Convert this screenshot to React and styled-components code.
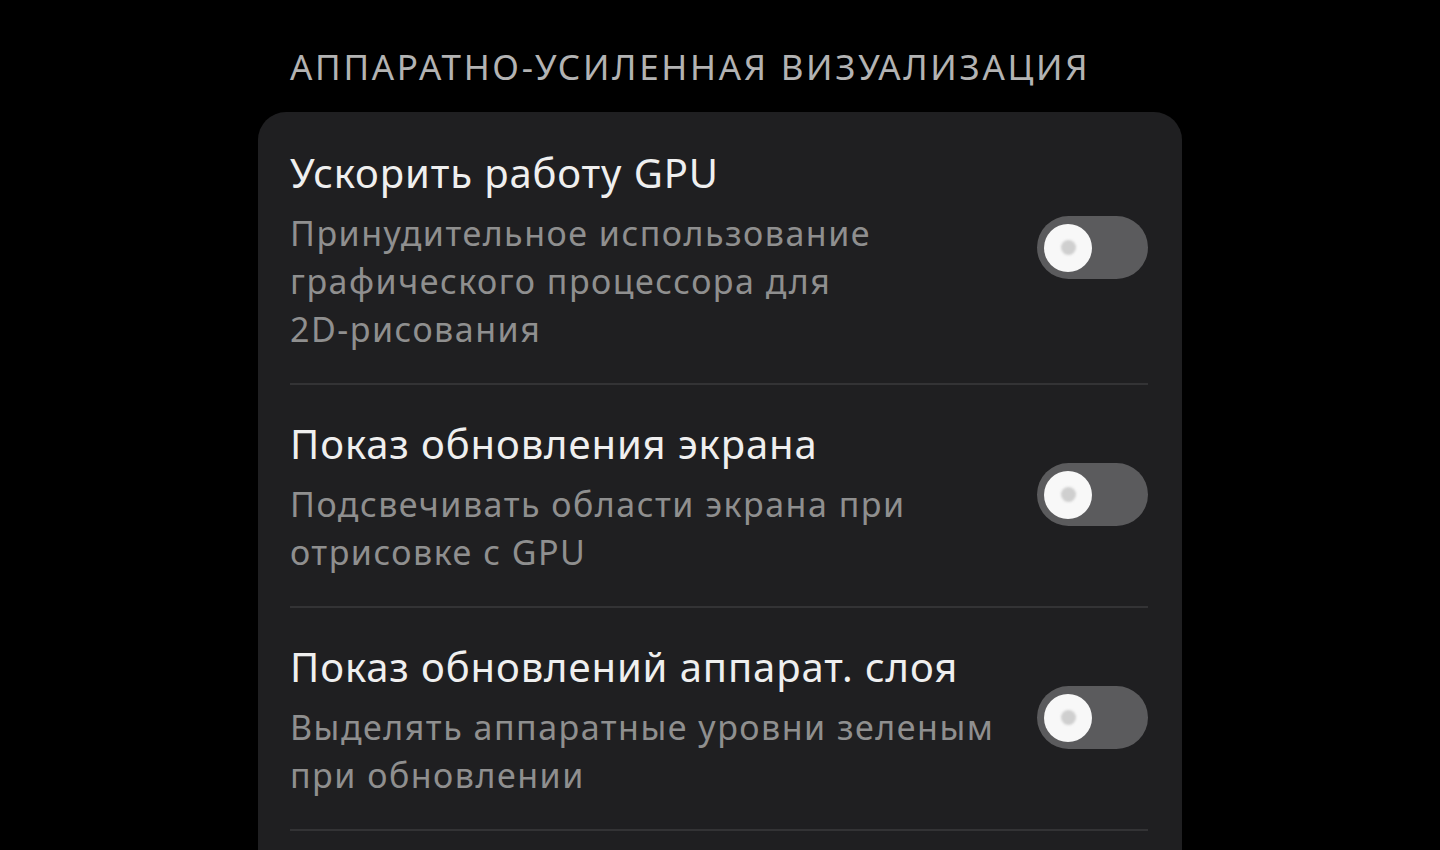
import React from 'react';
import styled, { createGlobalStyle } from 'styled-components';

const GlobalStyle = createGlobalStyle`
  html, body {
    margin: 0;
    padding: 0;
    background: #000;
    overflow: hidden;
  }
  body {
    font-family: "Noto Sans", "Open Sans", sans-serif;
  }
`;

const Page = styled.div`
  width: 924px;
  margin: 0 auto;
  padding-top: 47px;
`;

const SectionHeader = styled.div`
  padding-left: 32px;
  font-size: 35px;
  line-height: 40px;
  letter-spacing: 2.7px;
  color: #b3b3b3;
  margin-bottom: 25px;
  white-space: nowrap;
`;

const Card = styled.ul`
  list-style: none;
  margin: 0;
  padding: 2px 34px 60px 32px;
  background: #1f1f21;
  border-radius: 28px;
`;

const Row = styled.li`
  display: flex;
  align-items: center;
  gap: 28px;
  padding: 35px 0 30px;
  border-bottom: 2px solid #333335;
`;

const Texts = styled.div`
  flex: 1;
  min-width: 0;
`;

const Title = styled.div`
  font-size: 40px;
  line-height: 48px;
  letter-spacing: 0.9px;
  color: #efefef;
  margin-bottom: 12px;
`;

const Summary = styled.div`
  font-size: 34px;
  line-height: 48px;
  letter-spacing: 1.5px;
  color: #8f8f8f;
`;

const Track = styled.button`
  flex: none;
  width: 111px;
  height: 63px;
  margin-bottom: 7px;
  border: none;
  border-radius: 32px;
  background: #5b5b5d;
  padding: 0 0 0 7px;
  display: flex;
  align-items: center;
  cursor: pointer;
`;

const Knob = styled.span`
  width: 48px;
  height: 48px;
  border-radius: 50%;
  background: #f8f8f8;
  display: flex;
  align-items: center;
  justify-content: center;
  &::after {
    content: '';
    width: 15px;
    height: 15px;
    border-radius: 50%;
    background: #cfcfcf;
    filter: blur(1px);
  }
`;

const Toggle = () => (
  <Track type="button" aria-pressed="false">
    <Knob />
  </Track>
);

const settings = [
  {
    title: 'Ускорить работу GPU',
    summary: ['Принудительное использование', 'графического процессора для', '2D-рисования'],
  },
  {
    title: 'Показ обновления экрана',
    summary: ['Подсвечивать области экрана при', 'отрисовке с GPU'],
  },
  {
    title: 'Показ обновлений аппарат. слоя',
    summary: ['Выделять аппаратные уровни зеленым', 'при обновлении'],
  },
];

const App = () => (
  <>
    <GlobalStyle />
    <Page>
      <SectionHeader>АППАРАТНО-УСИЛЕННАЯ ВИЗУАЛИЗАЦИЯ</SectionHeader>
      <Card>
        {settings.map((s, i) => (
          <Row key={i}>
            <Texts>
              <Title>{s.title}</Title>
              <Summary>
                {s.summary.map((line, j) => (
                  <div key={j}>{line}</div>
                ))}
              </Summary>
            </Texts>
            <Toggle />
          </Row>
        ))}
      </Card>
    </Page>
  </>
);

export default App;
